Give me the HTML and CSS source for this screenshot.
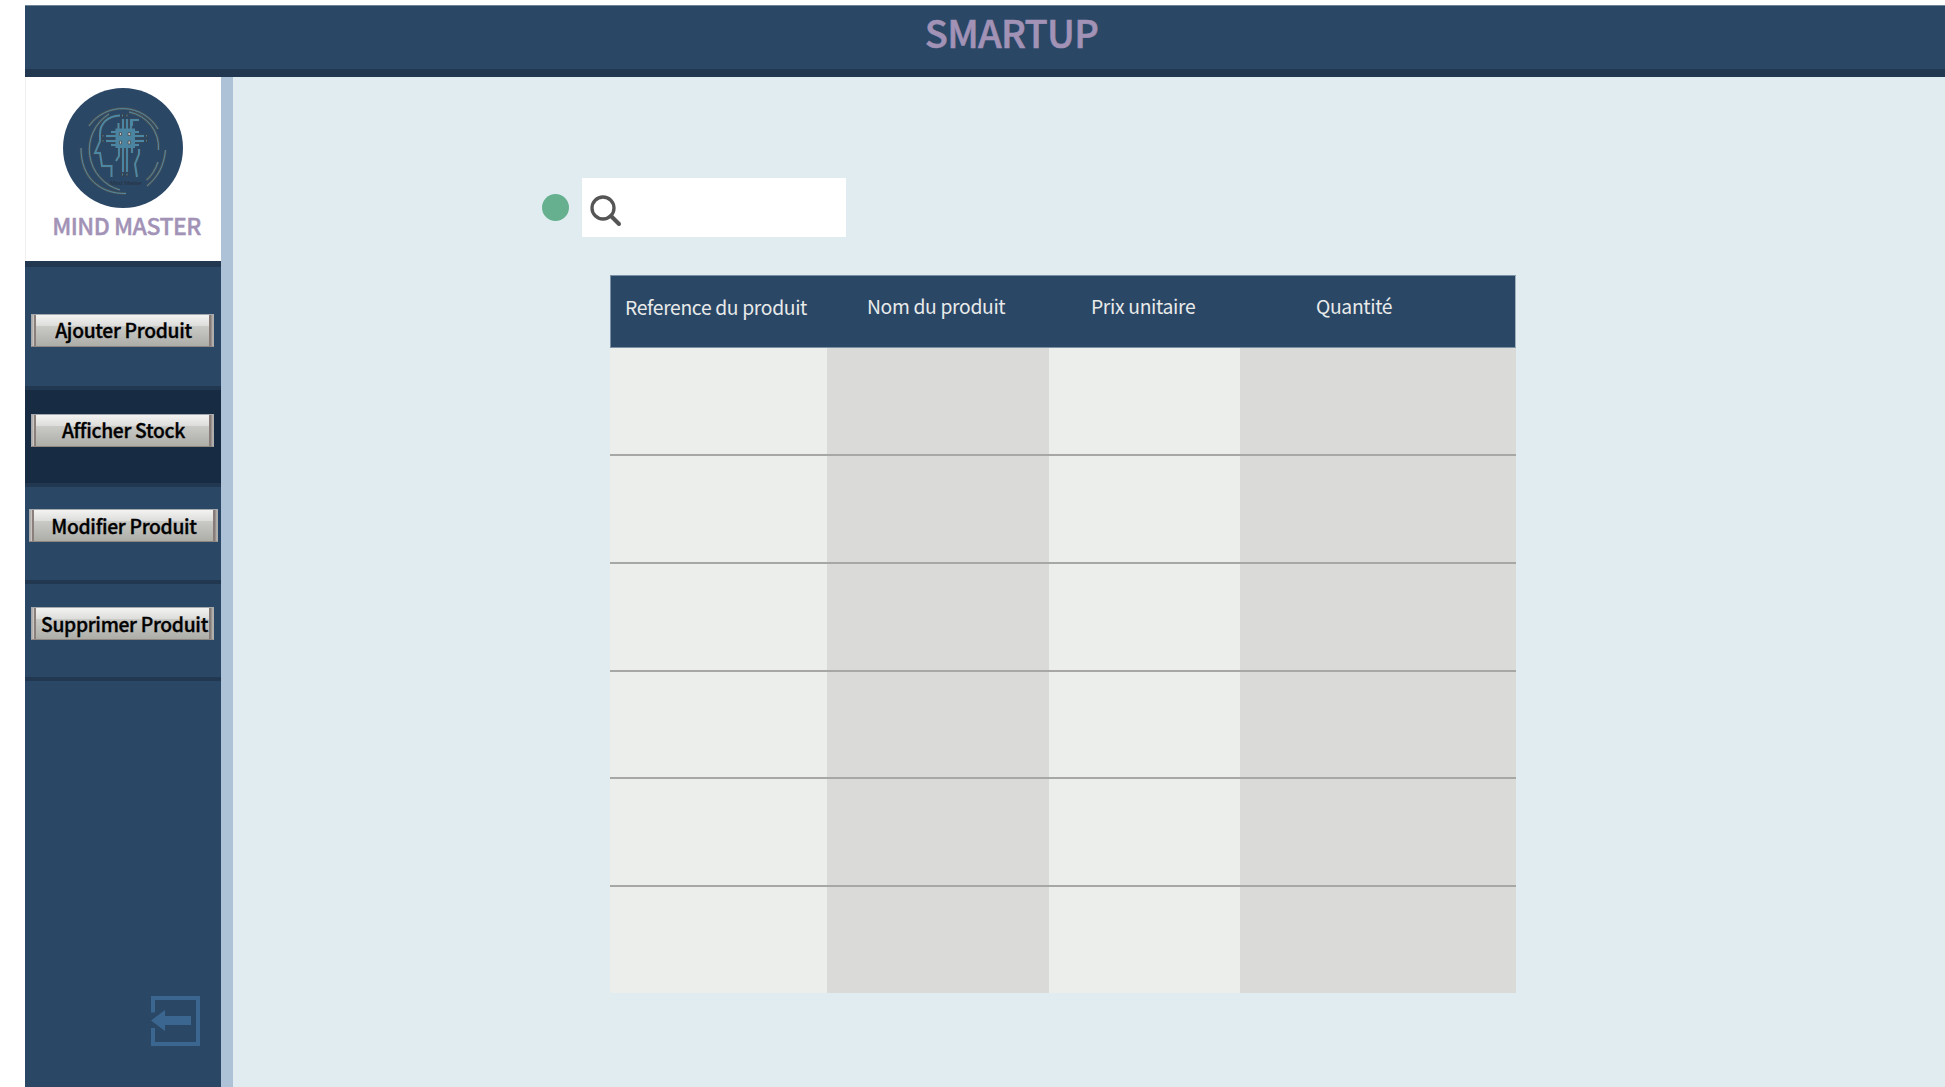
FILE: index.html
```html
<!DOCTYPE html>
<html lang="fr">
<head>
<meta charset="utf-8">
<title>SMARTUP - Stock</title>
<link rel="stylesheet" href="styles.css">
</head>
<body>
<div class="app">
  <header class="topbar"><h1 class="title">SMARTUP</h1></header>
  <div class="layout">
    <aside class="sidebar">
      <div class="brand">
        <svg class="logo" viewBox="0 0 120 120" width="120" height="120" fill="none">
          <circle cx="60" cy="60" r="60" fill="#2b4766"/>
          <g stroke="#4f5453" stroke-width="2.5">
            <path d="M26 38A41 41 0 0 1 95 41M46 26A42 42 0 0 0 57 102M66 24A36 36 0 0 1 95.500 62M18 60C18 90 37 106 63 105.500M102.500 62C101 78 95 89 84 98M95 74Q91 86 83.500 92"/>
          </g>
          <g stroke="#5089a3" stroke-width="1">
            <path d="M26 38A41 41 0 0 1 95 41M46 26A42 42 0 0 0 57 102M66 24A36 36 0 0 1 95.500 62M18 60C18 90 37 106 63 105.500M102.500 62C101 78 95 89 84 98M95 74Q91 86 83.500 92"/>
          </g>
          <g stroke="#444d50" stroke-width="3">
            <path d="M57 27.500C44 28 37 36 37 46V53L32 65H37L39 78H48.500V89M76 61V66L72 76L74 89M56 60V68L53 73M60 31V42M64 31V42M68 31V42M60 60V84M64 60V84M55.500 35V42M69 38V32H76M53 44H48M53 48H43M53 53H43M53 57H48M70 44H76M70 48H81M70 53H81M70 57H76M69 60V65"/>
          </g>
          <g stroke="#4b88a6" stroke-width="1.900">
            <path d="M57 27.500C44 28 37 36 37 46V53L32 65H37L39 78H48.500V89M76 61V66L72 76L74 89M56 60V68L53 73M60 31V42M64 31V42M68 31V42M60 60V84M64 60V84M55.500 35V42M69 38V32H76M53 44H48M53 48H43M53 53H43M53 57H48M70 44H76M70 48H81M70 53H81M70 57H76M69 60V65"/>
          </g>
          <rect x="52.500" y="40.500" width="19.500" height="19.500" fill="#4b84a1"/>
          <path d="M56.500 44.500h2v3h-2zM65 44.500h2.500v3H65zM56.500 53h2v3h-2zM65 53h2.500v3H65z" fill="#c0c5c3" stroke="#4a5054" stroke-width=".8"/>
          <path d="M58.500 26h2v3h-2zM63 26h2v3h-2zM58.500 85h2v3h-2zM63 85h2v3h-2zM39 46.500h2v2.500h-2zM39 51.500h2v2.500h-2zM82.500 46.500h2v2.500h-2zM82.500 51.500h2v2.500h-2z" fill="#4b84a1" stroke="#38424a" stroke-width="1"/>
          <text class="logo-text" x="47" y="96.500" textLength="32">Mind Master</text>
        </svg>
        <p class="brand-name">MIND MASTER</p>
      </div>
      <nav class="menu">
        <div class="item item-add"><button class="btn"><span>Ajouter Produit</span></button></div>
        <div class="item item-show"><button class="btn"><span>Afficher Stock</span></button></div>
        <div class="item item-edit"><button class="btn btn-wide"><span>Modifier Produit</span></button></div>
        <div class="item item-del"><button class="btn"><span>Supprimer Produit</span></button></div>
      </nav>
      <a class="logout">
        <svg viewBox="0 0 49 50" width="49" height="50"><path d="M2 16.500V2H47V48H2V32" fill="none" stroke="#3b6690" stroke-width="4"/><path d="M0 24.500L14 14V20H40V29H14V35Z" fill="#3b6690"/></svg>
      </a>
    </aside>
    <main class="content">
      <div class="search-row">
        <span class="status"></span>
        <div class="search">
          <svg viewBox="0 0 32 32" width="32" height="32" fill="none" stroke="#555"><circle cx="13" cy="13" r="11" stroke-width="3.300"/><path d="M21 21L29 29" stroke-width="4" stroke-linecap="round"/></svg>
        </div>
      </div>
      <div class="table">
        <div class="thead"><span class="th th-ref">Reference du produit</span><span class="th th-name">Nom du produit</span><span class="th th-price">Prix unitaire</span><span class="th th-qty">Quantité</span></div>
        <div class="tr"><i></i><i></i><i></i><i></i></div>
        <div class="tr"><i></i><i></i><i></i><i></i></div>
        <div class="tr"><i></i><i></i><i></i><i></i></div>
        <div class="tr"><i></i><i></i><i></i><i></i></div>
        <div class="tr"><i></i><i></i><i></i><i></i></div>
        <div class="tr"><i></i><i></i><i></i><i></i></div>
      </div>
    </main>
  </div>
</div>
</body>
</html>
```
FILE: styles.css
```css
* { box-sizing: border-box; }
body { margin: 0; background: #fff; font-family: "Noto Sans CJK SC", "Open Sans", sans-serif; overflow: hidden; }
h1, p { margin: 0; }
.app { height: 1087px; padding: 5px 0 0 25px; display: flex; flex-direction: column; }
.topbar { height: 72px; flex: none; background: #2b4766; border-top: 1px solid #6d8495; border-bottom: 8px solid #223850; display: flex; justify-content: center; align-items: flex-start; padding-left: 53px; }
.title { color: #a292b6; font-size: 38px; line-height: 51px; font-weight: 500; letter-spacing: -.7px; -webkit-text-stroke: .6px #a292b6; }
.layout { flex: 1; display: flex; min-height: 0; }
.sidebar { width: 208px; flex: none; background: #2b4766; border-right: 12px solid #adc1d7; display: flex; flex-direction: column; }
.brand { height: 184px; background: #fff; border-left: 1px solid #f0f0f0; padding: 11px 1px 0 0; display: flex; flex-direction: column; align-items: center; }
.logo { display: block; flex: none; }
.logo-text { font: 6px "Liberation Sans", sans-serif; fill: #26313c; }
.brand-name { color: #a292b6; font-size: 23px; line-height: 34px; font-weight: 500; letter-spacing: -.5px; padding-left: 7px; white-space: nowrap; -webkit-text-stroke: .4px #a292b6; }
.menu { display: flex; flex-direction: column; }
.item { border-bottom: 4px solid #223850; display: flex; align-items: flex-start; padding-left: 6px; }
.item-add { height: 129px; border-top: 6px solid #223850; padding-top: 47px; }
.item-show { height: 97px; background: #172c42; padding-top: 24px; }
.item-edit { height: 97px; padding: 22px 0 0 4px; }
.item-del { height: 97px; padding-top: 23px; }
.item-edit .btn, .item-del .btn { line-height: 32px; }
.item-edit .btn { padding-left: 2px; }
.item-del .btn { padding-left: 5px; }
.btn { width: 183px; height: 33px; padding: 0 0 0 3px; border: 1px solid #a3a9ad; border-right: 2px solid #b0aeab; border-bottom-color: #8e8680; font: 500 19.3px/30px "Noto Sans CJK SC", "Open Sans", sans-serif; letter-spacing: -.3px; -webkit-text-stroke: .35px #000; color: #000; white-space: nowrap; display: flex; justify-content: center;
  background: linear-gradient(90deg, #b5b1ae 0 1px, #c8c4c1 1px 2px, #8b7f7b 2px 4px, transparent 4px calc(100% - 3px), #877c77 calc(100% - 3px) calc(100% - 1px), #aaa 100%), linear-gradient(#f3f3f2, #dcdcda 36%, #c9c9c6 37%, #adaea8); }
.btn-wide { width: 189px; }
.logout { margin: auto 0 41px 126px; height: 50px; }
.logout svg { display: block; }
.content { flex: 1; background: #e1ecf1; padding-top: 101px; }
.search-row { display: flex; margin-left: 309px; align-items: flex-start; gap: 12.5px; }
.status { width: 27px; height: 27px; border-radius: 50%; background: #66b090; margin-top: 16px; }
.search { width: 264.5px; height: 59px; background: #fff; padding: 17px 0 0 8px; }
.table { margin: 38px 0 0 377px; width: 906px; display: flex; flex-direction: column; }
.thead, .tr { display: grid; grid-template-columns: 217px 222px 191px 1fr; }
.thead { height: 73px; background: #2b4766; border: 1px solid #7b90a4; border-right-color: #9fb0be; }
.th { color: #e8ebea; font-size: 19.3px; letter-spacing: -.33px; line-height: 30px; white-space: nowrap; padding-top: 15px; }
.th-ref { padding: 16px 0 0 14px; }
.th-name { padding-left: 39px; }
.th-price { padding-left: 41px; }
.th-qty { padding-left: 75px; }
.tr { height: 107.6px; }
.tr:nth-child(2) { height: 106.4px; }
.tr:last-child { height: 108.6px; }
.tr i { background: #eceeeb; }
.tr i:nth-child(even) { background: #dadad8; }
.tr + .tr { border-top: 2px solid #a7a7a6; }
```
